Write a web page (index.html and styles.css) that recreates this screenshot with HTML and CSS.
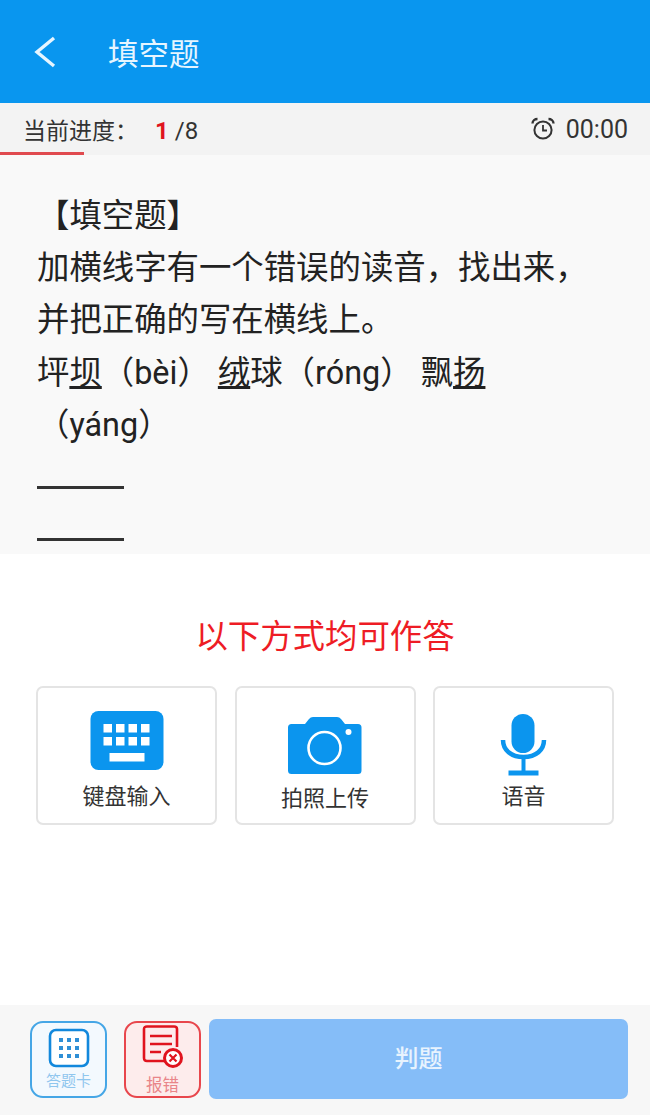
FILE: index.html
```html
<!DOCTYPE html>
<html lang="zh-CN">
  <head>
    <meta charset="UTF-8" />
    <meta name="viewport" content="width=device-width, initial-scale=1.0" />
    <title>填空题</title>
    <link rel="stylesheet" href="styles.css">
  </head>
  <body>
    <div class="page">
      <header class="topbar">
        <svg class="back" width="24" height="34" viewBox="0 0 24 34">
          <path d="M21 3 L4 17 L21 31" fill="none" stroke="#e6f5ff" stroke-width="3.4" />
        </svg>
        <h1 class="topbar-title">填空题</h1>
      </header>

      <div class="progress">
        <div class="progress-row">
          <div class="progress-text">
            <span>当前进度：</span>
            <span class="progress-num">1</span>
            <span class="progress-total">/8</span>
          </div>
          <div class="timer">
            <svg width="26" height="26" viewBox="0 0 26 26" fill="none" stroke="#333" stroke-width="2">
              <circle cx="13" cy="14" r="8.6" />
              <path d="M13 9 V14.5 H17" stroke-width="1.8" />
              <path d="M2.5 7.5 C2.5 4.5 5 3 7.5 3 M23.5 7.5 C23.5 4.5 21 3 18.5 3" stroke-width="2.4" />
            </svg>
            <span>00:00</span>
          </div>
        </div>
        <div class="progress-line"></div>
      </div>

      <section class="question">
        <p class="question-text">【填空题】<br>加横线字有一个错误的读音，找出来，<br>并把正确的写在横线上。<br>坪<u>坝</u>（bèi） <u>绒</u>球（róng） 飘<u>扬</u><br>（yáng）</p>
        <div class="blank blank-first"></div>
        <div class="blank"></div>
      </section>

      <section class="answer">
        <h2 class="answer-title">以下方式均可作答</h2>
        <div class="methods">
          <div class="method">
            <svg class="method-icon" width="80" height="70" viewBox="0 0 80 70">
              <rect x="3.5" y="3" width="73" height="59" rx="8" fill="#0b95ee" />
              <g fill="#fff">
                <rect x="16.5" y="16" width="8.5" height="8.5" /><rect x="29" y="16" width="8.5" height="8.5" /><rect x="41.5" y="16" width="8.5" height="8.5" /><rect x="54" y="16" width="8.5" height="8.5" />
                <rect x="16.5" y="29" width="8.5" height="8.5" /><rect x="29" y="29" width="8.5" height="8.5" /><rect x="41.5" y="29" width="8.5" height="8.5" /><rect x="54" y="29" width="8.5" height="8.5" />
                <rect x="22.5" y="45" width="35" height="8.5" />
              </g>
            </svg>
            <span class="method-label">键盘输入</span>
          </div>
          <div class="method">
            <svg class="method-icon" width="80" height="70" viewBox="0 0 80 70">
              <path d="M6.5 16 H20 L24 11 Q25.5 9 28 9 H52 Q54.5 9 56 11 L60 16 H73 Q76.5 16 76.5 19.5 V62.5 Q76.5 66 73 66 H6.5 Q3 66 3 62.5 V19.5 Q3 16 6.5 16 Z" fill="#0b95ee" />
              <circle cx="39.5" cy="40" r="16" fill="none" stroke="#fff" stroke-width="2.6" />
              <circle cx="63.5" cy="24" r="3" fill="#fff" />
            </svg>
            <span class="method-label method-label-low">拍照上传</span>
          </div>
          <div class="method">
            <svg class="method-icon" width="80" height="70" viewBox="0 0 80 70">
              <rect x="27.5" y="6" width="23" height="39" rx="11.5" fill="#0b95ee" />
              <path d="M19 32 C19 42 27 49 39.5 49 C52 49 60 42 60 32" fill="none" stroke="#0b95ee" stroke-width="4.5" />
              <path d="M39.5 49 V63" fill="none" stroke="#0b95ee" stroke-width="4" />
              <path d="M24.5 65 H54.5" fill="none" stroke="#0b95ee" stroke-width="5" />
            </svg>
            <span class="method-label">语音</span>
          </div>
        </div>
      </section>

      <footer class="footer">
        <div class="side-btn side-btn-blue">
          <svg width="42" height="40" viewBox="0 0 42 40">
            <rect x="2" y="2" width="38" height="36" rx="6" fill="#fff" stroke="#1288dc" stroke-width="2.6" />
            <g fill="#2f8fd6">
              <rect x="11" y="10" width="4" height="4" /><rect x="19" y="10" width="4" height="4" /><rect x="27" y="10" width="4" height="4" />
              <rect x="11" y="18" width="4" height="4" /><rect x="19" y="18" width="4" height="4" /><rect x="27" y="18" width="4" height="4" />
              <rect x="11" y="26" width="4" height="4" /><rect x="19" y="26" width="4" height="4" /><rect x="27" y="26" width="4" height="4" />
            </g>
          </svg>
          <span class="side-label side-label-blue">答题卡</span>
        </div>
        <div class="side-btn side-btn-red">
          <svg width="42" height="44" viewBox="0 0 42 44">
            <path d="M26 36 H5 Q2 36 2 33 V4 Q2 1.5 5 1.5 H32 Q35 1.5 35 4 V22" fill="none" stroke="#e0141e" stroke-width="2.6" />
            <path d="M8 11 H30 M8 19 H30 M8 27 H19" fill="none" stroke="#e0141e" stroke-width="2.6" />
            <circle cx="31" cy="33" r="8.5" fill="#fff" stroke="#e0141e" stroke-width="3" />
            <path d="M27.5 29.5 L34.5 36.5 M34.5 29.5 L27.5 36.5" fill="none" stroke="#e0141e" stroke-width="2.2" />
          </svg>
          <span class="side-label side-label-red">报错</span>
        </div>
        <button class="submit">判题</button>
      </footer>
    </div>
  </body>
</html>
```

FILE: styles.css
```css
html,
body {
  margin: 0;
  padding: 0;
}
body {
  font-family: Roboto, "Noto Sans CJK SC", sans-serif;
  background-color: #fff;
  color: #222;
}
.page {
  width: 650px;
  height: 1115px;
  display: flex;
  flex-direction: column;
  overflow: hidden;
}
.topbar {
  height: 103px;
  background-color: #0996ef;
  display: flex;
  align-items: center;
  padding-left: 33px;
  gap: 51px;
  flex-shrink: 0;
}
.back {
  display: block;
}
.topbar-title {
  margin: 0;
  font-size: 30.5px;
  font-weight: 400;
  color: #e6f5ff;
}
.progress {
  height: 52px;
  background-color: #f3f3f3;
  display: flex;
  flex-direction: column;
  flex-shrink: 0;
}
.progress-row {
  flex: 1;
  display: flex;
  align-items: center;
  justify-content: space-between;
  padding: 3px 22px 0 23px;
}
.progress-text {
  display: flex;
  align-items: baseline;
  font-size: 23px;
  color: #333;
}
.progress-num {
  margin-left: 17px;
  margin-right: 6px;
  font-size: 24px;
  font-weight: 700;
  color: #e0141e;
}
.progress-total {
  font-size: 24px;
}
.timer {
  display: flex;
  align-items: center;
  gap: 10px;
  font-size: 25px;
  color: #333;
}
.timer svg {
  display: block;
}
.progress-line {
  width: 84px;
  height: 3px;
  background-color: #e04a4f;
}
.question {
  height: 399px;
  background-color: #f9f9f9;
  padding: 35px 37px 0;
  box-sizing: border-box;
  flex-shrink: 0;
  overflow: hidden;
}
.question-text {
  margin: 0;
  font-size: 32.4px;
  line-height: 52.2px;
}
.blank {
  width: 87px;
  height: 52px;
  border-bottom: 3px solid #333;
  box-sizing: border-box;
}
.blank-first {
  height: 38px;
}
.answer {
  flex: 1;
  background-color: #fff;
  padding: 60px 36px 0;
}
.answer-title {
  margin: 0;
  text-align: center;
  font-size: 32.4px;
  font-weight: 400;
  line-height: 46px;
  color: #ee1c25;
}
.methods {
  display: grid;
  grid-template-columns: repeat(3, 181px);
  column-gap: 17.5px;
  margin-top: 26px;
}
.method {
  height: 139px;
  box-sizing: border-box;
  border: 2px solid #e4e4e4;
  border-radius: 7px;
  display: flex;
  flex-direction: column;
  align-items: center;
  padding-top: 20px;
}
.method-icon {
  display: block;
}
.method-label {
  margin-top: 4px;
  font-size: 22px;
  line-height: 30px;
  color: #333;
}
.method-label-low {
  margin-top: 6px;
}
.footer {
  height: 110px;
  background-color: #f7f7f7;
  display: flex;
  align-items: center;
  padding: 0 22px 0 30px;
  box-sizing: border-box;
  flex-shrink: 0;
}
.side-btn {
  width: 77px;
  height: 77px;
  margin-bottom: 2px;
  box-sizing: border-box;
  border-radius: 13px;
  border-width: 2.5px;
  border-style: solid;
  display: flex;
  flex-direction: column;
  align-items: center;
  padding-top: 5px;
}
.side-btn svg {
  display: block;
  flex-shrink: 0;
}
.side-btn-blue {
  border-color: #45a6e6;
  background-color: #f3f9fe;
}
.side-btn-red {
  margin-left: 17px;
  border-color: #e8464c;
  background-color: #fdecec;
  padding-top: 2px;
}
.side-label {
  line-height: 20px;
}
.side-label-blue {
  font-size: 15px;
  color: #8fc6ee;
  margin-top: 3px;
}
.side-label-red {
  font-size: 16.5px;
  color: #e98589;
  margin-top: 7px;
}
.submit {
  width: 419px;
  height: 80px;
  margin-left: 8px;
  margin-bottom: 2px;
  padding: 0 0 6px;
  border: none;
  border-radius: 7px;
  background-color: #85bdf8;
  color: #e8f3fe;
  font-family: inherit;
  font-size: 24px;
  font-weight: 500;
}
```
